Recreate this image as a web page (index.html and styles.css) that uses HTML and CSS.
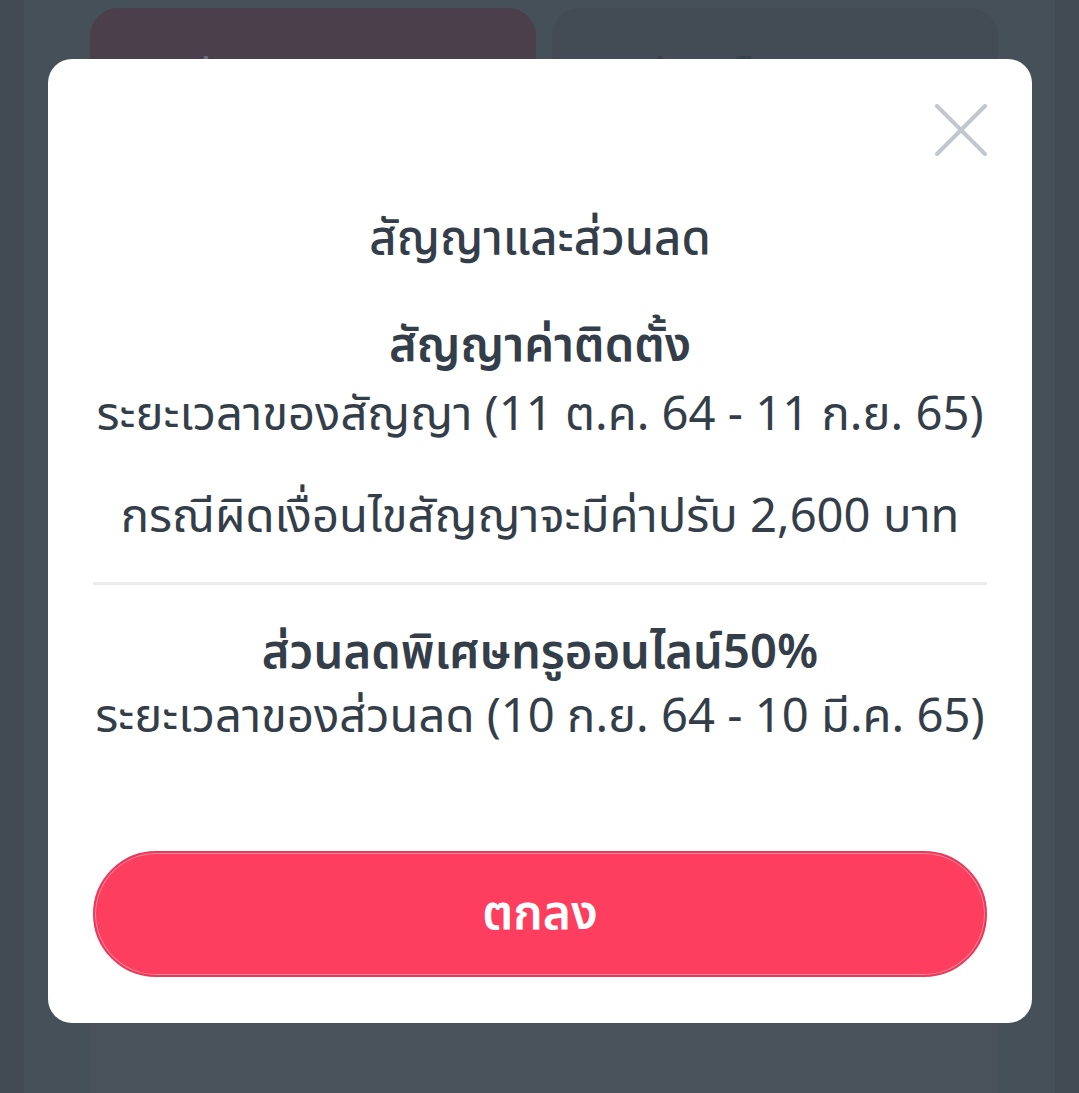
FILE: index.html
```html
<!DOCTYPE html>
<html lang="th">
<head>
	<meta charset="UTF-8">
	<title>สัญญาและส่วนลด</title>
	<link rel="stylesheet" href="styles.css">
</head>
<body>

<div class="page">
	<div class="cards">
		<div class="card card-active">ผ่อน 24 เดือน</div>
		<div class="card">จ่ายเต็มจำนวน</div>
	</div>
	<div class="panel"></div>
</div>

<div class="overlay">
	<div class="modal">
		<div class="modal-top">
			<button class="close" type="button">
				<svg width="52" height="52" viewBox="0 0 52 52">
					<path d="M2 2 L50 50 M50 2 L2 50" stroke="#c0c8ce" stroke-width="4" stroke-linecap="round" fill="none"/>
				</svg>
			</button>
		</div>

		<div class="modal-body">
			<div class="title">สัญญาและส่วนลด</div>

			<div class="block">
				<div class="heading">สัญญาค่าติดตั้ง</div>
				<div class="line">ระยะเวลาของสัญญา (11 ต.ค. 64 - 11 ก.ย. 65)</div>
				<div class="line line-gap">กรณีผิดเงื่อนไขสัญญาจะมีค่าปรับ 2,600 บาท</div>
			</div>

			<div class="divider"></div>

			<div class="block block-discount">
				<div class="heading">ส่วนลดพิเศษทรูออนไลน์50%</div>
				<div class="line line-tight">ระยะเวลาของส่วนลด (10 ก.ย. 64 - 10 มี.ค. 65)</div>
			</div>
		</div>

		<button class="btn-ok" type="button">ตกลง</button>
	</div>
</div>

</body>
</html>
```

FILE: styles.css
```css
*{
	margin: 0;
	padding: 0;
	box-sizing: border-box;
}
body{
	background: linear-gradient(to right, #424a53 0, #424a53 24px, #465059 24px, #465059 1055px, #424a53 1055px);
	font-family: "Noto Sans Thai", "Noto Sans", "Open Sans", sans-serif;
	color: #343e49;
	height: 1093px;
	overflow: hidden;
}
.page{
	padding: 8px 81px 0 90px;
}
.cards{
	display: flex;
	gap: 16px;
}
.card{
	flex: 1;
	height: 260px;
	border-radius: 28px;
	background-color: #434c55;
	padding-top: 44px;
	text-align: center;
	font-size: 47px;
	line-height: 60px;
	color: #38424b;
}
.card-active{
	background-color: #4a3f4b;
	color: #66707b;
}
.panel{
	margin-top: 16px;
	height: 809px;
	border-radius: 28px 28px 0 0;
	background-color: #49525b;
}

/* popup */
.overlay{
	position: fixed;
	left: 0;
	top: 0;
	right: 0;
	bottom: 0;
}
.modal{
	position: absolute;
	left: 48px;
	top: 59px;
	width: 984px;
	height: 964px;
	background: #fff;
	border-radius: 24px;
	padding: 45px 45px 46px;
	display: flex;
	flex-direction: column;
}
.modal-top{
	display: flex;
	justify-content: flex-end;
	height: 52px;
}
.close{
	border: none;
	background: none;
	width: 52px;
	height: 52px;
}
.close svg{
	display: block;
}
.modal-body{
	flex: 1;
	text-align: center;
	font-size: 47.2px;
	line-height: 60px;
	white-space: nowrap;
}
.title{
	font-weight: 500;
	margin-top: 54px;
}
.block{
	margin-top: 47px;
}
.heading{
	font-weight: 600;
}
.line{
	margin-top: 9px;
}
.line-gap{
	margin-top: 42px;
}
.line-tight{
	margin-top: 4px;
}
.divider{
	height: 3px;
	background: #ebecee;
	margin-top: 34px;
}
.block-discount{
	margin-top: 39px;
}
.btn-ok{
	height: 126px;
	border-radius: 63px;
	background-color: #fd3e5f;
	border: 2px solid #e93a59;
	box-shadow: inset 0 0 0 1px #ff8a9d;
	color: #fff;
	font-family: inherit;
	font-size: 48px;
	font-weight: 600;
}
```
